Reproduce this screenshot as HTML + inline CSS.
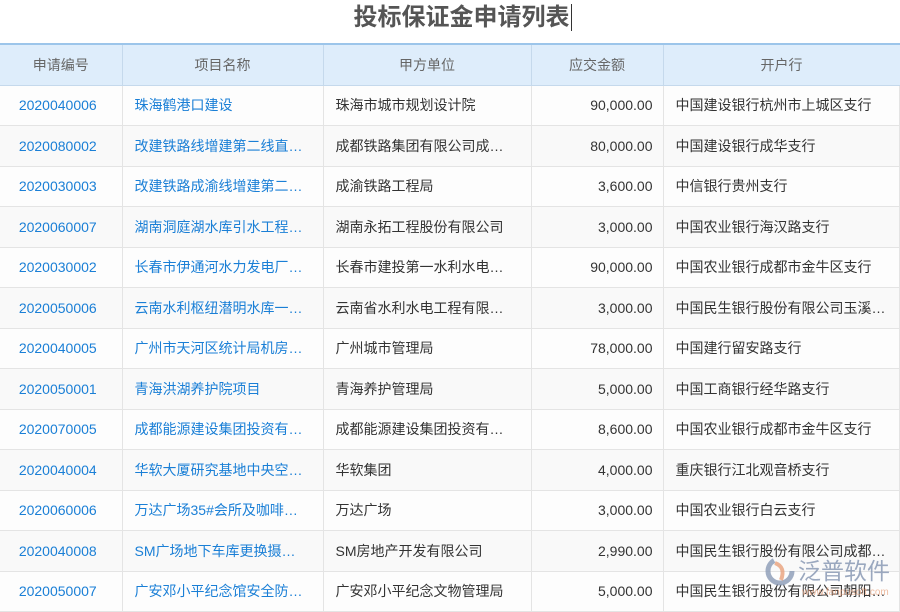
<!DOCTYPE html>
<html><head><meta charset="utf-8"><style>
*{margin:0;padding:0;box-sizing:border-box}
body{width:900px;height:600px;overflow:hidden;background:#fff;font-family:"Liberation Sans","Noto Sans CJK SC",sans-serif;position:relative}
h1{position:absolute;top:1px;left:0;width:900px;text-align:center;font-size:24px;font-weight:bold;color:#555;padding-left:25px;line-height:34px}
h1 span{border-right:1px solid #333;padding-right:1px}
table{position:absolute;top:43px;left:0;width:900px;border-collapse:collapse;table-layout:fixed;font-size:14px}
th{height:41px;background:#deedfb;color:#666;font-weight:normal;border-top:2px solid #9cc5ea;border-left:1px solid #c5d9ec;border-bottom:1px solid #c5d9ec}
td{height:40.5px;border:1px solid #e4e4e4;color:#333;white-space:nowrap;overflow:hidden;padding:0 12px;background:#fdfdfd}
tr:nth-child(odd) td{background:#f9f9f9}
td:first-child,th:first-child{border-left:none}
td:nth-child(1){color:#1a7fd6;text-align:center;padding:0 6px 0 0}
td:nth-child(2){color:#1a7fd6}
td:nth-child(4){text-align:right;padding-right:10px}
.logo{position:absolute;left:762px;top:551px;width:135px;height:49px}
</style></head><body>
<h1><span>投标保证金申请列表</span></h1>
<table>
<colgroup><col style="width:122px"><col style="width:201px"><col style="width:208px"><col style="width:132px"><col></colgroup>
<tr><th>申请编号</th><th>项目名称</th><th>甲方单位</th><th>应交金额</th><th>开户行</th></tr>
<tr><td>2020040006</td><td>珠海鹤港口建设</td><td>珠海市城市规划设计院</td><td>90,000.00</td><td>中国建设银行杭州市上城区支行</td></tr>
<tr><td>2020080002</td><td>改建铁路线增建第二线直…</td><td>成都铁路集团有限公司成…</td><td>80,000.00</td><td>中国建设银行成华支行</td></tr>
<tr><td>2020030003</td><td>改建铁路成渝线增建第二…</td><td>成渝铁路工程局</td><td>3,600.00</td><td>中信银行贵州支行</td></tr>
<tr><td>2020060007</td><td>湖南洞庭湖水库引水工程…</td><td>湖南永拓工程股份有限公司</td><td>3,000.00</td><td>中国农业银行海汉路支行</td></tr>
<tr><td>2020030002</td><td>长春市伊通河水力发电厂…</td><td>长春市建投第一水利水电…</td><td>90,000.00</td><td>中国农业银行成都市金牛区支行</td></tr>
<tr><td>2020050006</td><td>云南水利枢纽潜明水库一…</td><td>云南省水利水电工程有限…</td><td>3,000.00</td><td>中国民生银行股份有限公司玉溪…</td></tr>
<tr><td>2020040005</td><td>广州市天河区统计局机房…</td><td>广州城市管理局</td><td>78,000.00</td><td>中国建行留安路支行</td></tr>
<tr><td>2020050001</td><td>青海洪湖养护院项目</td><td>青海养护管理局</td><td>5,000.00</td><td>中国工商银行经华路支行</td></tr>
<tr><td>2020070005</td><td>成都能源建设集团投资有…</td><td>成都能源建设集团投资有…</td><td>8,600.00</td><td>中国农业银行成都市金牛区支行</td></tr>
<tr><td>2020040004</td><td>华软大厦研究基地中央空…</td><td>华软集团</td><td>4,000.00</td><td>重庆银行江北观音桥支行</td></tr>
<tr><td>2020060006</td><td>万达广场35#会所及咖啡…</td><td>万达广场</td><td>3,000.00</td><td>中国农业银行白云支行</td></tr>
<tr><td>2020040008</td><td>SM广场地下车库更换摄…</td><td>SM房地产开发有限公司</td><td>2,990.00</td><td>中国民生银行股份有限公司成都…</td></tr>
<tr><td>2020050007</td><td>广安邓小平纪念馆安全防…</td><td>广安邓小平纪念文物管理局</td><td>5,000.00</td><td>中国民生银行股份有限公司朝阳…</td></tr>
</table>
<svg class="logo" viewBox="0 0 135 49">
<circle cx="18" cy="20" r="12" fill="none" stroke="#8a9ab5" stroke-width="5" stroke-dasharray="50 30" opacity="0.8"/>
<path d="M13 12 Q24 16 19 29" stroke="#e8a07a" stroke-width="4" fill="none" opacity="0.8"/>
<text x="36" y="28" font-size="23" fill="#8a9ab5" opacity="0.85" font-family="Noto Sans CJK SC,sans-serif">泛普软件</text>
<text x="40" y="44" font-size="10" fill="#e8a07a" opacity="0.7" font-family="Liberation Sans,sans-serif">www.fanpusoft.com</text>
</svg>
</body></html>
